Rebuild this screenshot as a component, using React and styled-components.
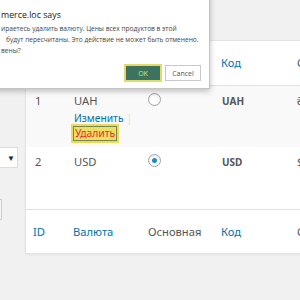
import styled, { createGlobalStyle } from 'styled-components';

const GlobalStyle = createGlobalStyle`
  body {
    margin: 0;
    background: #f1f1f1;
    overflow: hidden;
    font-family: "Noto Sans", "Open Sans", sans-serif;
  }
`;

const Page = styled.div`
  position: relative;
  display: flex;
  width: 300px;
  height: 300px;
  padding-top: 40px;
  box-sizing: border-box;
  overflow: hidden;
`;

const Side = styled.div`
  flex: none;
  width: 25px;
  padding-top: 107px;
  overflow: hidden;
  display: flex;
  flex-direction: column;
  align-items: flex-end;
  gap: 31px;
`;

const Select = styled.div`
  width: 60px;
  height: 21px;
  margin-right: 7px;
  box-sizing: border-box;
  background: #fff;
  border: 1px solid #ddd;
  display: flex;
  align-items: center;
  justify-content: flex-end;
  padding-right: 2px;
  font-size: 8px;
  color: #222;
`;

const SideButton = styled.div`
  width: 40px;
  height: 21px;
  margin-right: 23px;
  box-sizing: border-box;
  border: 1px solid #ccc;
  background: #f7f7f7;
`;

const Panel = styled.div`
  flex: none;
  width: 340px;
  height: 214px;
  background: #fff;
  border: 1px solid #e5e5e5;
  box-shadow: 0 1px 2px rgba(0, 0, 0, 0.06);
  box-sizing: border-box;
`;

const Table = styled.table`
  border-collapse: collapse;
  table-layout: fixed;
  width: 100%;
  font-size: 11.2px;
  color: #555;
`;

const Th = styled.th`
  box-sizing: border-box;
  width: ${({ $w }) => ($w ? `${$w}px` : 'auto')};
  height: 44px;
  padding: 0 0 0 7px;
  text-align: left;
  font-weight: 400;
  color: ${({ $link }) => ($link ? '#0073aa' : '#555')};
  border-${({ $top }) => ($top ? 'bottom' : 'top')}: 1px solid #e1e1e1;
  white-space: nowrap;
`;

const Tr = styled.tr`
  background: ${({ $alt }) => ($alt ? '#f9f9f9' : '#fff')};
`;

const Td = styled.td`
  box-sizing: border-box;
  height: 62px;
  padding: 6px 0 0 ${({ $pl }) => $pl ?? 7}px;
  vertical-align: top;
  line-height: 17px;
  white-space: nowrap;
`;

const Code = styled.span`
  font-size: 10px;
  font-weight: 700;
  color: #555;
`;

const Radio = styled.span`
  display: inline-block;
  width: 13px;
  height: 13px;
  margin-top: 1px;
  box-sizing: border-box;
  border: 1px solid #9da2a7;
  border-radius: 50%;
  background: #fff;
  position: relative;
  box-shadow: inset 0 1px 2px rgba(0, 0, 0, 0.1);

  &::after {
    content: '';
    display: ${({ $checked }) => ($checked ? 'block' : 'none')};
    position: absolute;
    left: 3px;
    top: 3px;
    width: 5px;
    height: 5px;
    border-radius: 50%;
    background: #1e8cbe;
  }
`;

const Actions = styled.div`
  display: flex;
  flex-direction: column;
  align-items: flex-start;
  line-height: 15px;
  margin-top: 2px;
`;

const EditLink = styled.span`
  color: #0073aa;
  font-size: 10.3px;
  &::after {
    content: '|';
    color: #ddd;
    margin-left: 3px;
  }
`;

const DeleteLink = styled.span`
  margin-left: -1px;
  padding: 0 1px;
  line-height: 13px;
  font-size: 10.3px;
  color: #dc3232;
  background: #f3dc63;
  border: 1px solid #6f8a4e;
  box-shadow: 0 0 0 2px #efd95a;
`;

const Dialog = styled.div`
  position: absolute;
  top: -12px;
  left: -10px;
  width: 220px;
  height: 101px;
  box-sizing: border-box;
  padding: 20px 0 0 10px;
  background: #fff;
  border: 1px solid #c4c4c4;
  box-shadow: 0 2px 6px rgba(0, 0, 0, 0.25);
  font-family: "Open Sans", "Noto Sans", sans-serif;
  color: #333;
`;

const DialogTitle = styled.div`
  font-size: 8.8px;
  line-height: 13px;
  color: #222;
`;

const DialogText = styled.div`
  margin-top: 0.5px;
  font-size: 6.6px;
  line-height: 11px;
  color: #444;
  white-space: nowrap;
`;

const Line = styled.div`
  padding-left: ${({ $indent }) => $indent ?? 0}px;
`;

const DialogButtons = styled.div`
  display: flex;
  justify-content: flex-end;
  align-items: center;
  gap: 3px;
  margin-top: 8.5px;
  padding-right: 8px;
`;

const OkButton = styled.div`
  width: 38px;
  height: 18px;
  box-sizing: border-box;
  background: #3d725f;
  border: 2px solid #e3da6b;
  color: #dbe36e;
  font-size: 7px;
  display: flex;
  align-items: center;
  justify-content: center;
`;

const CancelButton = styled.div`
  width: 36px;
  height: 16px;
  box-sizing: border-box;
  background: #fff;
  border: 1px solid #c8c8c8;
  color: #555;
  font-size: 7px;
  display: flex;
  align-items: center;
  justify-content: center;
`;

const App = () => {
  return (
    <>
      <GlobalStyle />
      <Page>
        <Side>
          <Select>▼</Select>
          <SideButton />
        </Side>
        <Panel>
          <Table>
            <thead>
              <tr>
                <Th $top $w={40} $link>ID</Th>
                <Th $top $w={75} $link>Валюта</Th>
                <Th $top $w={73}>Основная</Th>
                <Th $top $w={76} $link>Код</Th>
                <Th $top>Символ</Th>
              </tr>
            </thead>
            <tbody>
              <Tr $alt>
                <Td $pl={9}>1</Td>
                <Td $pl={8}>
                  UAH
                  <Actions>
                    <EditLink>Изменить</EditLink>
                    <DeleteLink>Удалить</DeleteLink>
                  </Actions>
                </Td>
                <Td><Radio /></Td>
                <Td $pl={8}><Code>UAH</Code></Td>
                <Td>₴</Td>
              </Tr>
              <Tr>
                <Td $pl={9}>2</Td>
                <Td $pl={8}>USD</Td>
                <Td><Radio $checked /></Td>
                <Td $pl={8}><Code>USD</Code></Td>
                <Td>$</Td>
              </Tr>
            </tbody>
            <tfoot>
              <tr>
                <Th $w={40} $link>ID</Th>
                <Th $w={75} $link>Валюта</Th>
                <Th $w={73}>Основная</Th>
                <Th $w={76} $link>Код</Th>
                <Th>Символ</Th>
              </tr>
            </tfoot>
          </Table>
        </Panel>
        <Dialog>
          <DialogTitle>merce.loc says</DialogTitle>
          <DialogText>
            <Line>ираетесь удалить валюту. Цены всех продуктов в этой</Line>
            <Line $indent={5}>будут пересчитаны. Это действие не может быть отменено.</Line>
            <Line>вены?</Line>
          </DialogText>
          <DialogButtons>
            <OkButton>OK</OkButton>
            <CancelButton>Cancel</CancelButton>
          </DialogButtons>
        </Dialog>
      </Page>
    </>
  );
};

export default App;
